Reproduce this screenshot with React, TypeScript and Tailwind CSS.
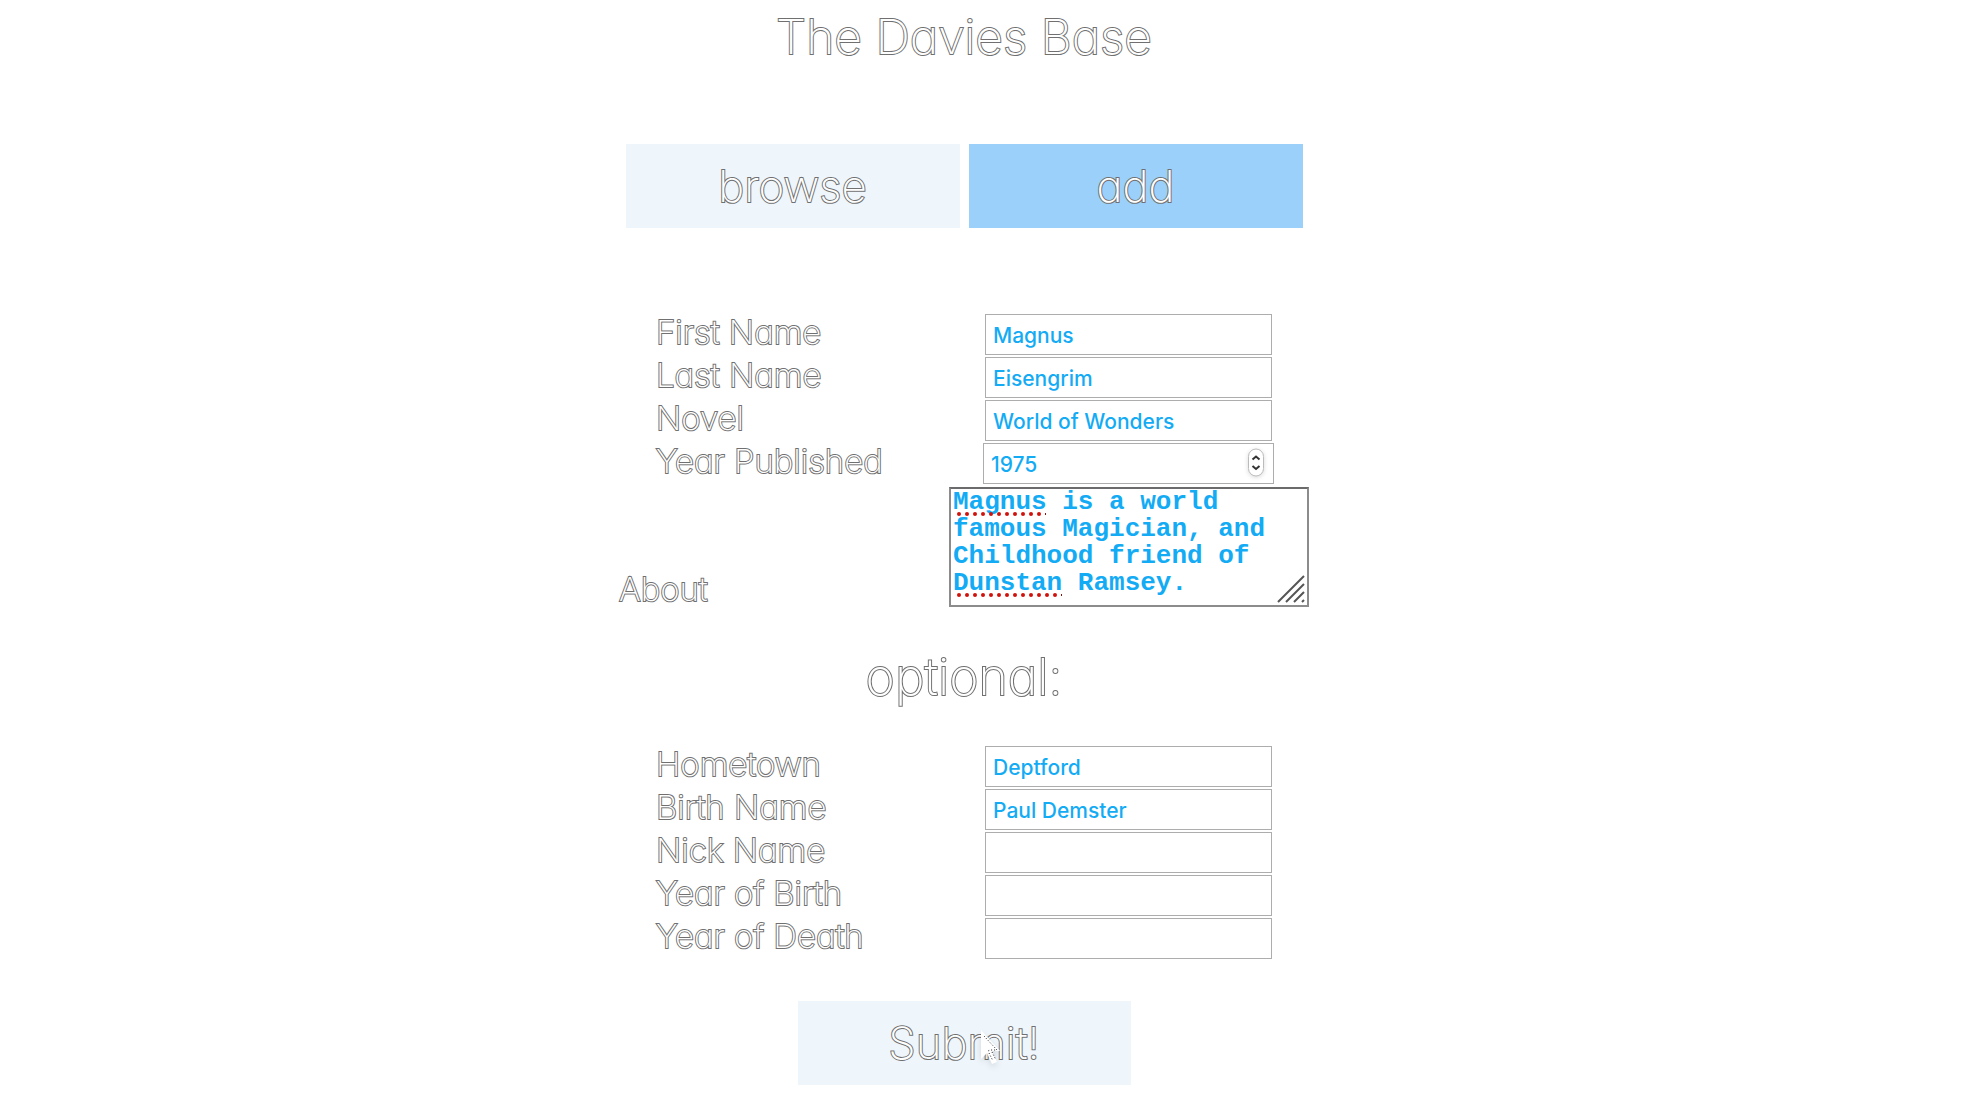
import type { InputHTMLAttributes, ReactNode } from 'react';

const outlined =
  "font-['Inter',sans-serif] font-extralight text-white whitespace-nowrap [-webkit-text-stroke:2px_#707070] [paint-order:stroke_fill] [font-feature-settings:'cv11']";

const field =
  "h-[41px] border border-[#adadad] bg-white px-[7px] pt-px font-['Inter',sans-serif] text-[21px] font-medium text-[#14abf5] outline-none";

type FieldProps = { id: string; label: string } & InputHTMLAttributes<HTMLInputElement>;

function Row({ id, label, children }: { id: string; label: string; children: ReactNode }) {
  return (
    <div className="mx-auto flex w-[616px] items-start justify-between">
      <label htmlFor={id} className={`${outlined} text-[33px] leading-9`}>
        {label}
      </label>
      {children}
    </div>
  );
}

function TextRow({ id, label, ...rest }: FieldProps) {
  return (
    <Row id={id} label={label}>
      <input id={id} type="text" className={`${field} w-[287px]`} {...rest} />
    </Row>
  );
}

function YearRow({ id, label, ...rest }: FieldProps) {
  return (
    <Row id={id} label={label}>
      <div className="relative -mx-0.5">
        <input
          id={id}
          type="number"
          className={`${field} w-[291px] [appearance:textfield] [&::-webkit-inner-spin-button]:appearance-none`}
          {...rest}
        />
        <svg
          aria-hidden="true"
          viewBox="0 0 20 32"
          className="pointer-events-none absolute top-1 right-2 h-8 w-5 drop-shadow-sm"
          fill="none"
        >
          <rect x="2.500" y="2" width="15" height="27" rx="7.500" fill="#fff" stroke="#bbb" />
          <path d="M6.500 12.500 10 9.500l3.500 3M6.500 19l3.500 3 3.500-3" stroke="#333" strokeWidth="2" />
        </svg>
      </div>
    </Row>
  );
}

function SpellDots({ count, className }: { count: number; className: string }) {
  return (
    <svg
      aria-hidden="true"
      className={`pointer-events-none absolute h-1 overflow-visible ${className}`}
      viewBox={`0 0 ${count * 8} 4`}
      width={count * 8}
      height="4"
    >
      {Array.from({ length: count }, (_, i) => (
        <circle key={i} cx={2 + i * 8} cy="2" r="2" fill="#d0120c" />
      ))}
      <rect x={count * 8} y="1" width="1" height="2" fill="#8a1010" />
    </svg>
  );
}

export default function App() {
  return (
    <main className="flex min-h-screen flex-col items-center bg-white pr-[60px] pb-6">
      <h1 className={`${outlined} pt-[9px] text-[48px] leading-[56px]`}>The Davies Base</h1>

      <nav className="mt-[79px] flex gap-[9px]">
        <button type="button" className={`${outlined} h-[84px] w-[334px] bg-[#eef5fb] text-[44px] [-webkit-text-stroke-color:#444]`}>
          browse
        </button>
        <button type="button" className={`${outlined} h-[84px] w-[334px] bg-[#9bd0fa] text-[44px] [-webkit-text-stroke-color:#444]`}>
          add
        </button>
      </nav>

      <form className="flex flex-col items-center" onSubmit={(e) => e.preventDefault()}>
        <div className="mt-[86px] flex flex-col gap-0.5">
          <TextRow id="first" label="First Name" defaultValue="Magnus" />
          <TextRow id="last" label="Last Name" defaultValue="Eisengrim" />
          <TextRow id="novel" label="Novel" defaultValue="World of Wonders" />
          <YearRow id="year" label="Year Published" defaultValue="1975" />
        </div>

        <div className="mt-[3px] flex w-[690px] items-end justify-between">
          <label htmlFor="about" className={`${outlined} text-[33px] leading-9`}>
            About
          </label>
          <div className="relative">
            <textarea
              id="about"
              spellCheck={false}
              className="block h-[120px] w-[360px] resize-none overflow-hidden border-2 border-[#8c8c8c] border-t-[#6b6b6e] px-0.5 font-['Liberation_Mono',monospace] text-[26px] leading-[27px] font-bold text-[#14abf5] outline-none"
              defaultValue="Magnus is a world famous Magician, and Childhood friend of Dunstan Ramsey."
            />
            <SpellDots count={11} className="top-[25px] left-2" />
            <SpellDots count={13} className="top-[106px] left-2" />
            <svg aria-hidden="true" viewBox="0 0 28 28" className="pointer-events-none absolute right-1 bottom-1 size-7" fill="none">
              <path d="M1 27 27 1M9 27 27 9M17 27l10-10M25 27l2-2" stroke="#555" strokeWidth="2" />
            </svg>
          </div>
        </div>

        <h2 className={`${outlined} mt-[42px] text-[50px] leading-[56px]`}>optional:</h2>

        <div className="mt-[41px] flex flex-col gap-0.5">
          <TextRow id="hometown" label="Hometown" defaultValue="Deptford" />
          <TextRow id="birthname" label="Birth Name" defaultValue="Paul Demster" />
          <TextRow id="nickname" label="Nick Name" />
          <TextRow id="birthyear" label="Year of Birth" />
          <TextRow id="deathyear" label="Year of Death" />
        </div>

        <div className="relative mt-[42px]">
          <button type="submit" className={`${outlined} block h-[84px] w-[333px] bg-[#eef5fb] text-[44px] [-webkit-text-stroke-color:#444]`}>
            Submit!
          </button>
          <svg
            aria-hidden="true"
            viewBox="0 0 20 36"
            className="pointer-events-none absolute top-7 left-[182px] h-9 w-5 drop-shadow-md"
          >
            <path d="M1 1v29l6-6 5 11 5-2-5-11h8z" fill="#fff" />
            <path d="M4 7l13 14h-7l-2 1M9 24l4 8M12 23l4 8" fill="none" stroke="#222" strokeDasharray="1 2" />
          </svg>
        </div>
      </form>
    </main>
  );
}
